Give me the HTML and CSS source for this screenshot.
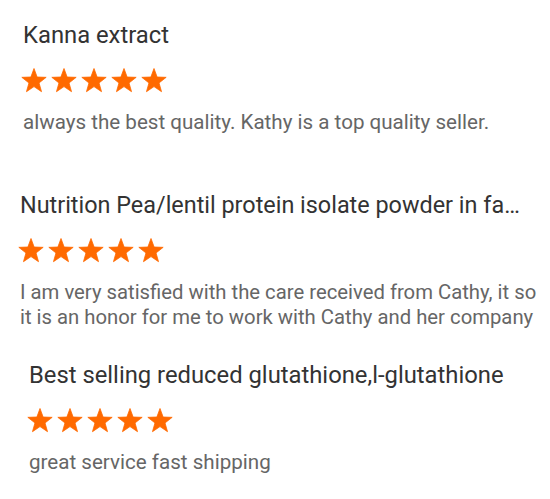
FILE: index.html
```html
<!DOCTYPE html>
<html>
<head>
<meta charset="utf-8">
<link rel="stylesheet" href="styles.css">
</head>
<body>
<div class="reviews">
  <div class="review review--a">
    <div class="title">Kanna extract</div>
    <div class="stars">
      <svg class="star" viewBox="0 0 26 26"><polygon points="13,0.5 16.12,9.01 25.17,9.35 18.04,14.94 20.52,23.66 13,18.6 5.48,23.66 7.96,14.94 0.83,9.35 9.88,9.01"/></svg>
      <svg class="star" viewBox="0 0 26 26"><polygon points="13,0.5 16.12,9.01 25.17,9.35 18.04,14.94 20.52,23.66 13,18.6 5.48,23.66 7.96,14.94 0.83,9.35 9.88,9.01"/></svg>
      <svg class="star" viewBox="0 0 26 26"><polygon points="13,0.5 16.12,9.01 25.17,9.35 18.04,14.94 20.52,23.66 13,18.6 5.48,23.66 7.96,14.94 0.83,9.35 9.88,9.01"/></svg>
      <svg class="star" viewBox="0 0 26 26"><polygon points="13,0.5 16.12,9.01 25.17,9.35 18.04,14.94 20.52,23.66 13,18.6 5.48,23.66 7.96,14.94 0.83,9.35 9.88,9.01"/></svg>
      <svg class="star" viewBox="0 0 26 26"><polygon points="13,0.5 16.12,9.01 25.17,9.35 18.04,14.94 20.52,23.66 13,18.6 5.48,23.66 7.96,14.94 0.83,9.35 9.88,9.01"/></svg>
    </div>
    <div class="text">
      <div class="line">always the best quality. Kathy is a top quality seller.</div>
    </div>
  </div>
  <div class="review review--b">
    <div class="title">Nutrition Pea/lentil protein isolate powder in factory price</div>
    <div class="stars">
      <svg class="star" viewBox="0 0 26 26"><polygon points="13,0.5 16.12,9.01 25.17,9.35 18.04,14.94 20.52,23.66 13,18.6 5.48,23.66 7.96,14.94 0.83,9.35 9.88,9.01"/></svg>
      <svg class="star" viewBox="0 0 26 26"><polygon points="13,0.5 16.12,9.01 25.17,9.35 18.04,14.94 20.52,23.66 13,18.6 5.48,23.66 7.96,14.94 0.83,9.35 9.88,9.01"/></svg>
      <svg class="star" viewBox="0 0 26 26"><polygon points="13,0.5 16.12,9.01 25.17,9.35 18.04,14.94 20.52,23.66 13,18.6 5.48,23.66 7.96,14.94 0.83,9.35 9.88,9.01"/></svg>
      <svg class="star" viewBox="0 0 26 26"><polygon points="13,0.5 16.12,9.01 25.17,9.35 18.04,14.94 20.52,23.66 13,18.6 5.48,23.66 7.96,14.94 0.83,9.35 9.88,9.01"/></svg>
      <svg class="star" viewBox="0 0 26 26"><polygon points="13,0.5 16.12,9.01 25.17,9.35 18.04,14.94 20.52,23.66 13,18.6 5.48,23.66 7.96,14.94 0.83,9.35 9.88,9.01"/></svg>
    </div>
    <div class="text">
      <div class="line">I am very satisfied with the care received from Cathy, it so</div>
      <div class="line">it is an honor for me to work with Cathy and her company</div>
    </div>
  </div>
  <div class="review review--c">
    <div class="title">Best selling reduced glutathione,l-glutathione</div>
    <div class="stars">
      <svg class="star" viewBox="0 0 26 26"><polygon points="13,0.5 16.12,9.01 25.17,9.35 18.04,14.94 20.52,23.66 13,18.6 5.48,23.66 7.96,14.94 0.83,9.35 9.88,9.01"/></svg>
      <svg class="star" viewBox="0 0 26 26"><polygon points="13,0.5 16.12,9.01 25.17,9.35 18.04,14.94 20.52,23.66 13,18.6 5.48,23.66 7.96,14.94 0.83,9.35 9.88,9.01"/></svg>
      <svg class="star" viewBox="0 0 26 26"><polygon points="13,0.5 16.12,9.01 25.17,9.35 18.04,14.94 20.52,23.66 13,18.6 5.48,23.66 7.96,14.94 0.83,9.35 9.88,9.01"/></svg>
      <svg class="star" viewBox="0 0 26 26"><polygon points="13,0.5 16.12,9.01 25.17,9.35 18.04,14.94 20.52,23.66 13,18.6 5.48,23.66 7.96,14.94 0.83,9.35 9.88,9.01"/></svg>
      <svg class="star" viewBox="0 0 26 26"><polygon points="13,0.5 16.12,9.01 25.17,9.35 18.04,14.94 20.52,23.66 13,18.6 5.48,23.66 7.96,14.94 0.83,9.35 9.88,9.01"/></svg>
    </div>
    <div class="text">
      <div class="line">great service fast shipping</div>
    </div>
  </div>
</div>
</body>
</html>
```

FILE: styles.css
```css
html, body {
  margin: 0;
  padding: 0;
  background: #fff;
}

.reviews {
  width: 540px;
  overflow: hidden;
  font-family: Roboto, "Liberation Sans", sans-serif;
}

.review {
  height: 170px;
  display: flex;
  flex-direction: column;
  box-sizing: border-box;
}

.review--a { padding-left: 23px; }
.review--b { padding-left: 20px; }
.review--c { padding-left: 29px; }

.title {
  margin-top: 21px;
  height: 28px;
  line-height: 28px;
  font-size: 23.8px;
  color: #333;
  white-space: nowrap;
  overflow: hidden;
  text-overflow: ellipsis;
  max-width: 508px;
}

.review--b .title {
  font-size: 23.4px;
  max-width: 506px;
}

.stars {
  margin-top: 19px;
  margin-left: -2px;
  display: flex;
  gap: 4px;
  height: 26px;
}

.star {
  width: 26px;
  height: 26px;
  fill: #ff6a00;
  stroke: #ff6a00;
  stroke-width: 0.8;
  stroke-linejoin: round;
}

.text {
  margin-top: 16px;
  font-size: 20.6px;
  line-height: 25px;
  color: #666;
}

.review--b .text {
  font-size: 20.3px;
}

.line {
  white-space: nowrap;
}
```
